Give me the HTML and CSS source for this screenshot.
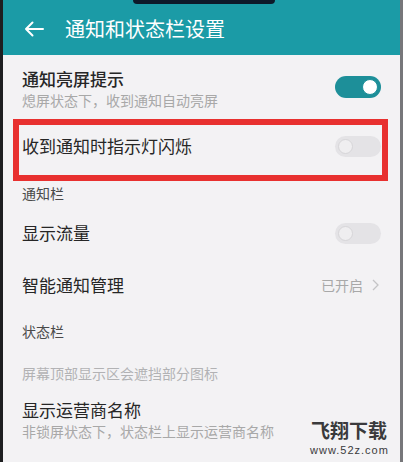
FILE: index.html
```html
<!DOCTYPE html>
<html lang="zh-CN">
<head>
    <meta charset="UTF-8">
    <meta name="viewport" content="width=device-width, initial-scale=1.0">
    <title>通知和状态栏设置</title>
    <link rel="stylesheet" href="styles.css">
</head>
<body>
    <div class="phone">
        <div class="notch"></div>
        <div class="header">
            <svg class="back" width="20" height="16" viewBox="0 0 20 16">
                <path d="M19 8H2M8.5 1.5L2 8l6.5 6.5" fill="none" stroke="#fff" stroke-width="2" stroke-linecap="round" stroke-linejoin="round"/>
            </svg>
            <h1>通知和状态栏设置</h1>
        </div>

        <div class="row row-wake">
            <div class="row-text">
                <div class="title">通知亮屏提示</div>
                <div class="sub">熄屏状态下，收到通知自动亮屏</div>
            </div>
            <span class="switch on"></span>
        </div>

        <div class="row row-led">
            <div class="title">收到通知时指示灯闪烁</div>
            <span class="switch"></span>
        </div>

        <div class="section sec-bar">通知栏</div>

        <div class="row row-flow">
            <div class="title">显示流量</div>
            <span class="switch"></span>
        </div>

        <div class="row row-smart">
            <div class="title">智能通知管理</div>
            <span class="value">已开启
                <svg width="7" height="12" viewBox="0 0 7 12"><path d="M1 1l5 5-5 5" fill="none" stroke="#c4c4c6" stroke-width="1.3"/></svg>
            </span>
        </div>

        <div class="section sec-status">状态栏</div>

        <div class="row row-hint">
            <div class="hint">屏幕顶部显示区会遮挡部分图标</div>
        </div>

        <div class="row row-carrier">
            <div class="row-text">
                <div class="title">显示运营商名称</div>
                <div class="sub">非锁屏状态下，状态栏上显示运营商名称</div>
            </div>
        </div>

        <div class="watermark">
            <div class="wm-name">飞翔下载</div>
            <div class="wm-url">www.52z.com</div>
        </div>
    </div>
</body>
</html>
```

FILE: styles.css
```css
body {
    margin: 0;
    padding: 0;
    font-family: "Noto Sans CJK SC", "Noto Sans", sans-serif;
    background-color: #1c1c1c;
}
.phone {
    position: relative;
    width: 403px;
    height: 462px;
    box-sizing: border-box;
    border-left: 3px solid #1e1e20;
    border-right: 3px solid #77777a;
    background-color: #f3f2f4;
    overflow: hidden;
}
.notch {
    position: absolute;
    left: 130px;
    top: 0;
    width: 142px;
    height: 4px;
    background: #0d1a2a;
    border-radius: 0 0 5px 5px;
}
.header {
    height: 55px;
    background: #1b9ba6;
    display: flex;
    align-items: center;
    padding-left: 21px;
    padding-top: 3px;
    box-sizing: border-box;
}
.header .back {
    margin-right: 21px;
}
.header h1 {
    margin: 0;
    font-size: 20px;
    font-weight: 400;
    color: #fff;
    line-height: 24px;
}
.row {
    display: flex;
    align-items: center;
    justify-content: space-between;
    padding: 0 19px 0 19px;
    box-sizing: border-box;
}
.title {
    font-size: 17px;
    line-height: 20px;
    color: #262626;
}
.sub {
    font-size: 14px;
    line-height: 20px;
    color: #a8a8a8;
    margin-top: 1px;
}
.row-wake {
    height: 64px;
    padding-top: 14px;
    padding-bottom: 10px;
}
.row-wake .title {
    font-weight: 500;
}
.row-led {
    height: 62px;
    margin: 0 12px 0 10px;
    padding: 0 1px 8px 3px;
    border: 6px solid #e8302f;
}
.section {
    font-size: 14px;
    color: #4a4a4a;
    padding-left: 19px;
}
.sec-bar {
    height: 24px;
    line-height: 24px;
}
.row-flow {
    height: 56px;
}
.row-smart {
    height: 48px;
}
.sec-status {
    height: 44px;
    line-height: 44px;
}
.row-hint {
    height: 40px;
}
.hint {
    font-size: 14px;
    color: #b2b2b4;
}
.row-carrier {
    padding-top: 7px;
}
.value {
    display: flex;
    align-items: center;
    gap: 9px;
    font-size: 14px;
    color: #a8a8a8;
    margin-right: 2px;
}
.switch {
    position: relative;
    width: 46px;
    height: 21px;
    border-radius: 11px;
    background: #e4e3e6;
    flex-shrink: 0;
}
.switch::after {
    content: "";
    position: absolute;
    left: 3px;
    top: 3px;
    width: 13px;
    height: 13px;
    border-radius: 50%;
    background: #efeef0;
    border: 1px solid #d6d5d8;
}
.switch.on {
    background: #1d8f99;
    height: 22px;
}
.switch.on::after {
    left: auto;
    right: 3px;
    width: 14px;
    height: 14px;
    background: #fff;
    border: 1px solid #1d8f99;
}
.row-wake .switch {
    margin-top: -4px;
}
.watermark {
    position: absolute;
    right: 12px;
    top: 420px;
    width: 78px;
    text-align: center;
}
.wm-name {
    font-size: 19px;
    font-weight: 700;
    line-height: 19px;
    color: #3a3a3c;
}
.wm-url {
    font-family: "Liberation Sans", sans-serif;
    font-size: 11px;
    letter-spacing: 1px;
    line-height: 12px;
    margin-top: 5px;
    color: #3a3a3c;
}
```
